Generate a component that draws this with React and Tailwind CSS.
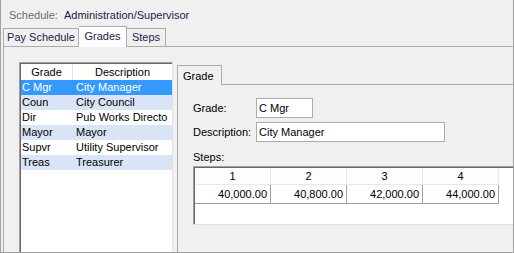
import React from "react";

const rows = [
  ["C Mgr", "City Manager"],
  ["Coun", "City Council"],
  ["Dir", "Pub Works Directo"],
  ["Mayor", "Mayor"],
  ["Supvr", "Utility Supervisor"],
  ["Treas", "Treasurer"],
];

const steps = [
  ["1", "40,000.00"],
  ["2", "40,800.00"],
  ["3", "42,000.00"],
  ["4", "44,000.00"],
];

export default function App() {
  return (
    <div className="w-[514px] h-[253px] bg-[#f0f0f0] border-l border-r border-b border-[#a0a0a0] flex flex-col overflow-hidden font-['Liberation_Sans',Arial,sans-serif] text-[11px] leading-[13px] text-black">
      {/* Title */}
      <div className="h-[26px] flex items-start pt-[9px] pl-[8px] gap-[6px]">
        <span className="text-[#6d6d6d]">Schedule:</span>
        <span className="text-[#1c1c48]">Administration/Supervisor</span>
      </div>

      {/* Tab strip */}
      <div className="h-[20px] flex items-end pl-[2px] relative z-10">
        <div className="h-[18px] w-[76px] flex items-center justify-center border border-b-0 border-[#acacac] bg-[#f0f0f0] text-[#1c1c48] whitespace-nowrap">
          Pay Schedule
        </div>
        <div className="h-[21px] w-[48px] -mb-px flex items-start justify-center pt-[3px] border border-b-0 border-l-0 border-[#acacac] bg-white text-[#1c1c48]">
          Grades
        </div>
        <div className="h-[18px] w-[39px] flex items-center justify-center border border-b-0 border-l-0 border-[#acacac] bg-[#f0f0f0] text-[#1c1c48]">
          Steps
        </div>
      </div>

      {/* Panel */}
      <div className="flex-1 ml-[2px] border-l border-t border-[#acacac] flex pl-[15px] pt-[15px] min-h-0">
        {/* List box */}
        <div className="w-[154px] flex-none bg-white border-l border-t border-[#a0a0a0] shadow-[inset_1px_1px_0_#696969] border-r border-r-[#e3e3e3] pl-px pt-px self-stretch">
          <div className="h-[16px] flex bg-white">
            <div className="w-[52px] flex items-center justify-center border-r border-[#e5e5e5]">Grade</div>
            <div className="flex-1 flex items-center justify-center">Description</div>
          </div>
          {rows.map(([g, d], i) => (
            <div
              key={g}
              className={
                "h-[15px] flex items-center " +
                (i === 0
                  ? "bg-[#3399ff] text-white"
                  : i % 2 === 1
                  ? "bg-[#d9e5f6]"
                  : "bg-white")
              }
            >
              <div className="w-[53px] pl-[1px]">{g}</div>
              <div className="flex-1 pl-[2px] whitespace-nowrap overflow-hidden">{d}</div>
            </div>
          ))}
        </div>

        {/* Right panel */}
        <div className="flex-1 flex flex-col ml-[4px] mt-[2px] min-w-0">
          <div className="h-[20px] flex items-end">
            <div className="h-[20px] w-[45px] flex items-start pt-[4px] pl-[5px] border border-b-0 border-[#acacac] bg-[#f0f0f0] -mb-px relative z-10">
              Grade
            </div>
            <div className="flex-1"></div>
          </div>
          <div className="flex-1 border-l border-t border-[#acacac] flex flex-col pl-[15px] pt-[13px]">
            <div className="h-[20px] flex items-center">
              <span className="w-[63px]">Grade:</span>
              <div className="w-[57px] h-[20px] bg-white border border-[#acacac] flex items-center pl-[2px]">C Mgr</div>
            </div>
            <div className="h-[20px] flex items-center mt-[4px]">
              <span className="w-[63px]">Description:</span>
              <div className="w-[189px] h-[20px] bg-white border border-[#acacac] flex items-center pl-[2px]">City Manager</div>
            </div>
            <div className="mt-[9px] h-[13px]">Steps:</div>
            {/* Grid */}
            <div className="mt-[2px] h-[59px] bg-white border-l border-t border-b border-[#a0a0a0] border-b-[#e3e3e3] shadow-[inset_1px_1px_0_#696969] pl-px pt-px flex flex-col">
              <div className="h-[17px] flex">
                {steps.map(([h]) => (
                  <div key={h} className="w-[76px] flex items-center justify-center border-r border-b border-[#e2e8f4] bg-[#fcfdff]">
                    {h}
                  </div>
                ))}
              </div>
              <div className="h-[19px] flex">
                {steps.map(([h, v]) => (
                  <div key={h} className="w-[76px] flex items-center justify-end pr-[3px] border-r border-b border-[#a0a0a0]">
                    {v}
                  </div>
                ))}
              </div>
            </div>
          </div>
        </div>
      </div>
    </div>
  );
}
